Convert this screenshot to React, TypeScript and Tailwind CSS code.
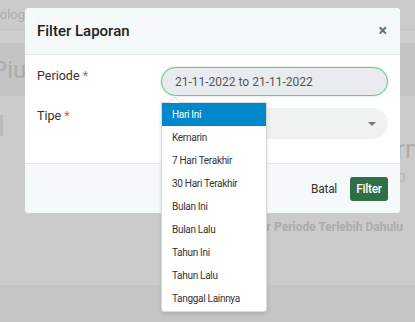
import React from "react";

const items = [
  "Hari Ini",
  "Kemarin",
  "7 Hari Terakhir",
  "30 Hari Terakhir",
  "Bulan Ini",
  "Bulan Lalu",
  "Tahun Ini",
  "Tahun Lalu",
  "Tanggal Lainnya",
];

export default function App() {
  return (
    <div
      className="relative w-[415px] h-[322px] overflow-hidden bg-[#cbcbcb]"
      style={{ fontFamily: "Roboto, 'Liberation Sans', sans-serif" }}
    >
      {/* background page (dimmed) */}
      <div className="flex flex-col h-full">
        <div className="h-[30px] border-b border-[#c4c4c4] flex items-center text-[13px] text-[#adadad] -ml-[28px] whitespace-nowrap">
          Teknologi
        </div>
        <div className="h-[13px] bg-[#cdcdcd]" />
        <div className="h-[53px] bg-[#c4c4c4] flex items-center text-[24px] text-[#ababab] -ml-[8px] whitespace-nowrap">
          Piutang
        </div>
        <div className="flex-1 flex flex-col bg-[#cbcbcb]">
          <div className="h-[19px]" />
          <div className="flex">
            <div className="w-[3px] h-[21px] bg-[#b6bcb6]" />
          </div>
          <div className="h-[26px] flex items-center pl-[351px] text-[26px] text-[#ababab] leading-none whitespace-nowrap">
            Informasi
          </div>
          <div className="h-[22px] flex items-end pl-[398px] text-[13px] text-[#b4b4b4] leading-none whitespace-nowrap">
            0
          </div>
          <div className="h-[35px]" />
          <div className="flex justify-end pr-[12px] text-[12px] leading-[16px] font-bold text-[#ababab] whitespace-nowrap">
            Pilih Filter Periode Terlebih Dahulu
          </div>
        </div>
        <div className="h-[37px] bg-[#c4c5c4]" />
      </div>

      {/* modal */}
      <div className="absolute left-[25px] top-[8px] w-[375px] rounded-[4px] bg-white overflow-hidden">
        <div className="h-[47px] bg-[#f5f9f9] border-b border-[#e3e6e6] flex items-center justify-between pl-[12px] pr-[13px]">
          <span className="text-[15px] font-medium text-[#212121]">Filter Laporan</span>
          <span className="text-[16px] font-bold text-[#6e6e6e] leading-none">×</span>
        </div>
        <div className="h-[108px] flex flex-col pl-[12px] pr-[12px] pt-[12px]">
          <div className="flex items-start">
            <div className="w-[124px] text-[12.5px] leading-[16px] text-[#333] pt-[1px]">
              Periode <span className="text-[#e05555]">*</span>
            </div>
            <div className="flex-1 h-[29px] rounded-full border border-[#6cc58a] bg-[#e9ecef] shadow-[0_0_2px_rgba(92,184,120,0.5)] flex items-center pl-[13px] text-[12px] text-[#555]">
              21-11-2022 to 21-11-2022
            </div>
          </div>
          <div className="flex items-start mt-[12px]">
            <div className="w-[124px] text-[12.5px] leading-[16px] text-[#333]">
              Tipe <span className="text-[#e05555]">*</span>
            </div>
            <div className="flex-1 h-[31px] rounded-full bg-[#eef3f1] flex items-center justify-end pr-[12px]">
              <div className="w-0 h-0 border-l-[4px] border-r-[4px] border-t-[4px] border-l-transparent border-r-transparent border-t-[#777]" />
            </div>
          </div>
        </div>
        <div className="h-[50px] bg-[#f5f9f9] border-t border-[#e3e6e6] flex items-center justify-end pr-[12px] gap-[13px]">
          <span className="text-[12px] tracking-[-0.3px] text-[#333]">Batal</span>
          <button className="h-[24px] w-[38px] rounded-[3px] bg-[#2f6e46] text-white text-[12px] tracking-[-0.3px] font-medium">
            Filter
          </button>
        </div>
      </div>

      {/* dropdown */}
      <div className="absolute left-[161px] top-[102px] w-[106px] bg-white border border-[#d9d9d9] rounded-b-[3px] shadow-[0_2px_4px_rgba(0,0,0,0.12)] pb-[1px]">
        <div className="absolute -top-[6px] left-[7px] w-0 h-0 border-l-[6px] border-r-[6px] border-b-[6px] border-l-transparent border-r-transparent border-b-[#d9d9d9]" />
        <div className="absolute -top-[5px] left-[8px] w-0 h-0 border-l-[5px] border-r-[5px] border-b-[5px] border-l-transparent border-r-transparent border-b-white" />
        {items.map((it, i) => (
          <div
            key={it}
            className={
              i === 0
                ? "h-[23px] flex items-center pl-[10px] text-[10px] tracking-[-0.3px] bg-[#0088cc] text-white"
                : "h-[23px] flex items-center pl-[10px] text-[10px] tracking-[-0.3px] text-[#333]"
            }
          >
            {it}
          </div>
        ))}
      </div>
    </div>
  );
}
